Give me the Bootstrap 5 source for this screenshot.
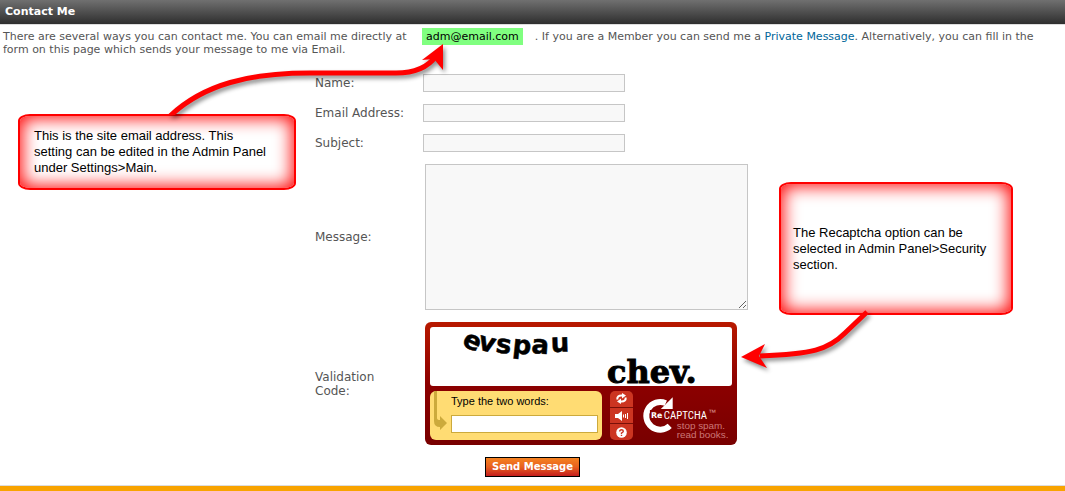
<!DOCTYPE html>
<html lang="en">
<head>
<meta charset="utf-8">
<meta name="viewport" content="width=device-width, initial-scale=1">
<title>Contact Me</title>
<link rel="stylesheet" href="https://cdn.jsdelivr.net/npm/bootstrap@5.3.0/dist/css/bootstrap.min.css">
<style>
  body { font: 11px/13px "DejaVu Sans", Verdana, sans-serif; color: #555; background: #fff; }
  .title-bar { font-size: 11px; line-height: 24px; padding: 0 5px; background: linear-gradient(#707070, #2e2e2e); border-bottom: 1px solid #ddd; }
  .intro { padding: 5px 6px 0 3px; margin-bottom: 18px; }
  .intro a { color: #069; }
  .site-mail { color: #000; background: #80ff80; padding: 2px 4px; margin: 0 12px; }
  .contact-form { width: 435px; row-gap: 12px; grid-template-columns: 94px 1fr; column-gap: 14px; }
  .contact-form > label { font-size: 12px; line-height: 14px; }
  .field { border: 1px solid #c6c6c6; border-radius: 0; background: #f8f8f8; padding: 0 4px; font-size: 12px; }
  .field-line { width: 202px; height: 18px; }
  .field-area { width: 323px; height: 146px; resize: both; }
  .inset-cell { margin-left: 2px; }
  .send { font-size: 10px; line-height: 18px; padding: 0 6px; border: 1px solid #000; border-radius: 0; color: #fff; background: linear-gradient(#f58220, #e8601f 50%, #c41e1e); grid-column: 1 / -1; }
  .send:hover { color: #fff; }
  .foot { height: 6px; margin-top: 8px; background: #f8a300; border-top: 1px solid #ddd; }

  .captcha { width: 312px; padding: 5px; border-radius: 6px; background: linear-gradient(#b81900, #8c0000 50%, #780000); }
  .challenge { background: #fff; border-radius: 3px; height: 59px; margin-bottom: 5px; }
  .challenge svg { overflow: visible; }
  .answer { width: 172px; height: 49px; padding: 4px 4px 0 21px; border-radius: 6px; background: #ffdc73; color: #000; font: 11px/13px "Liberation Sans", Arial, sans-serif; }
  .answer input { width: 147px; height: 18px; border: 1px solid #ccaa3c; background: #fff; margin-top: 7px; padding: 0 3px; }
  .hook { left: 4px; top: 0; }
  .tools { width: 23px; height: 49px; margin-left: 8px; border-radius: 5px; background: #781008; gap: 1px; overflow: hidden; }
  .tools button { flex: 1; border: 0; padding: 0; background: #cc3521; display: flex; align-items: center; justify-content: center; }
  .brand { margin-left: 6px; }

  .callout-note { color: #000; font: 13px/16px "Liberation Sans", Arial, sans-serif; background: #fff; border: 2px solid #f00; border-radius: 12px / 7px; box-shadow: inset 0 0 17px 2px #f00; }
  .note-mail { left: -297px; top: 40px; width: 278px; height: 76px; padding: 0 22px 0 14px; }
  .note-captcha { left: 464px; top: 108px; width: 234px; height: 133px; padding: 0 12px; }
  .arrow { pointer-events: none; filter: drop-shadow(2px 3px 2px rgba(0,0,0,.45)); }
  .arrow-mail { left: -155px; top: -34px; }
  .arrow-captcha { left: 420px; top: 231px; }
</style>
</head>
<body>
<header class="title-bar text-white fw-bold">Contact Me</header>
<main>
  <p class="intro">There are several ways you can contact me. You can email me directly at <span class="site-mail">adm@email.com</span>. If you are a Member you can send me a <a href="#" class="text-decoration-none">Private Message</a>. Alternatively, you can fill in the <br>form on this page which sends your message to me via Email.</p>

  <form class="contact-form d-grid mx-auto align-items-center position-relative">
    <label for="name">Name:</label>
    <input id="name" type="text" class="field field-line">
    <label for="email">Email Address:</label>
    <input id="email" type="email" class="field field-line">
    <label for="subject">Subject:</label>
    <input id="subject" type="text" class="field field-line">
    <label for="message">Message:</label>
    <textarea id="message" class="field field-area inset-cell"></textarea>
    <label for="answer">Validation Code:</label>
    <div class="captcha inset-cell">
      <div class="challenge">
        <svg width="302" height="59" viewBox="0 0 302 59" class="d-block" role="img" aria-label="Two distorted words">
          <g stroke="#000" font-weight="bold">
            <text font-family="DejaVu Sans" font-size="26" stroke-width=".5" x="31 47 65 82 101 121" y="18 22 25 26 26 25" rotate="25 14 8 6 4 -2">evspau</text>
            <text font-family="DejaVu Serif" font-size="32" stroke-width="1" x="177" y="56">chev.</text>
          </g>
        </svg>
      </div>
      <div class="d-flex">
        <div class="answer position-relative">
          <svg class="hook position-absolute" width="14" height="40" viewBox="0 0 14 40" aria-hidden="true"><path d="M0 0H3V27Q3 29 6 29V25L13 32L6 39V36Q0 36 0 30Z" fill="#ccaa3c"/></svg>
          <label for="answer" class="d-block">Type the two words:</label>
          <input id="answer" type="text" class="d-block">
        </div>
        <div class="tools d-flex flex-column">
          <button type="button" aria-label="New challenge"><svg width="11" height="11" viewBox="0 0 11 11"><g fill="none" stroke="#fff" stroke-width="2"><path d="M1.300 6.500Q1 2.500 5.500 2.500H7M9.700 4.500Q10 8.500 5.500 8.500H4"/></g><path d="M6 0L10 2.500L6 5.500ZM5 5.500L1 8.500L5 11Z" fill="#fff"/></svg></button>
          <button type="button" aria-label="Audio challenge"><svg width="13" height="10" viewBox="0 0 13 10"><path d="M0 3H3L7 0V10L3 7H0Z" fill="#fff"/><path d="M8.500 3.500V6.500M10.500 3V7M12.500 2V8" stroke="#fff"/></svg></button>
          <button type="button" aria-label="Help"><svg width="11" height="11" viewBox="0 0 11 11"><circle cx="5.500" cy="5.500" r="5.300" fill="#fff"/><path d="M3.700 4.500Q3.700 2.700 5.500 2.700T7.300 4.200Q7.300 5 5.500 6V7M5.500 7.700V9" stroke="#cc3521" stroke-width="1.400" fill="none"/></svg></button>
        </div>
        <svg class="brand" width="94" height="49" viewBox="0 0 94 49" role="img" aria-label="reCAPTCHA">
          <path d="M31 35A14 14 0 1 1 27 12" fill="none" stroke="#fff" stroke-width="6"/>
          <path d="M34 6V18H22Z" fill="#fff"/>
          <rect x="11" y="19" width="24" height="10" fill="#840000"/>
          <text x="12" y="27" fill="#fff" font-family="DejaVu Sans" font-weight="bold" font-size="8">Re</text>
          <text x="25" y="28" fill="#fff" font-family="'Liberation Sans Narrow','Roboto Condensed'" font-size="11">CAPTCHA</text>
          <text x="70" y="24" fill="#d99" font-family="Liberation Sans" font-size="8">™</text>
          <g fill="#c77" font-family="Liberation Sans" font-size="10"><text x="38" y="38">stop spam.</text><text x="38" y="47">read books.</text></g>
        </svg>
      </div>
    </div>
    <button type="submit" class="send btn fw-bold mx-auto">Send Message</button>

    <aside class="callout-note note-mail position-absolute d-flex align-items-center">This is the site email address. This setting can be edited in the Admin Panel under Settings&gt;Main.</aside>
    <aside class="callout-note note-captcha position-absolute d-flex align-items-center">The Recaptcha option can be selected in Admin Panel&gt;Security section.</aside>
    <svg class="arrow arrow-mail position-absolute" width="290" height="75" viewBox="160 40 290 75" aria-hidden="true">
      <path d="M170 116C204 84 250 73 310 73H396Q424 73 436 56" fill="none" stroke="#f00" stroke-width="5"/>
      <path d="M443 44L422 60L434 59L443 70Z" fill="#f00"/>
    </svg>
    <svg class="arrow arrow-captcha position-absolute" width="140" height="70" viewBox="735 305 140 70" aria-hidden="true">
      <path d="M867 312L845 333C828 350 812 354 760 356" fill="none" stroke="#f00" stroke-width="5"/>
      <path d="M741 357L765 344L759 356L767 368Z" fill="#f00"/>
    </svg>
  </form>
</main>
<footer class="foot"></footer>
<script src="https://cdn.jsdelivr.net/npm/bootstrap@5.3.0/dist/js/bootstrap.bundle.min.js"></script>
</body>
</html>
